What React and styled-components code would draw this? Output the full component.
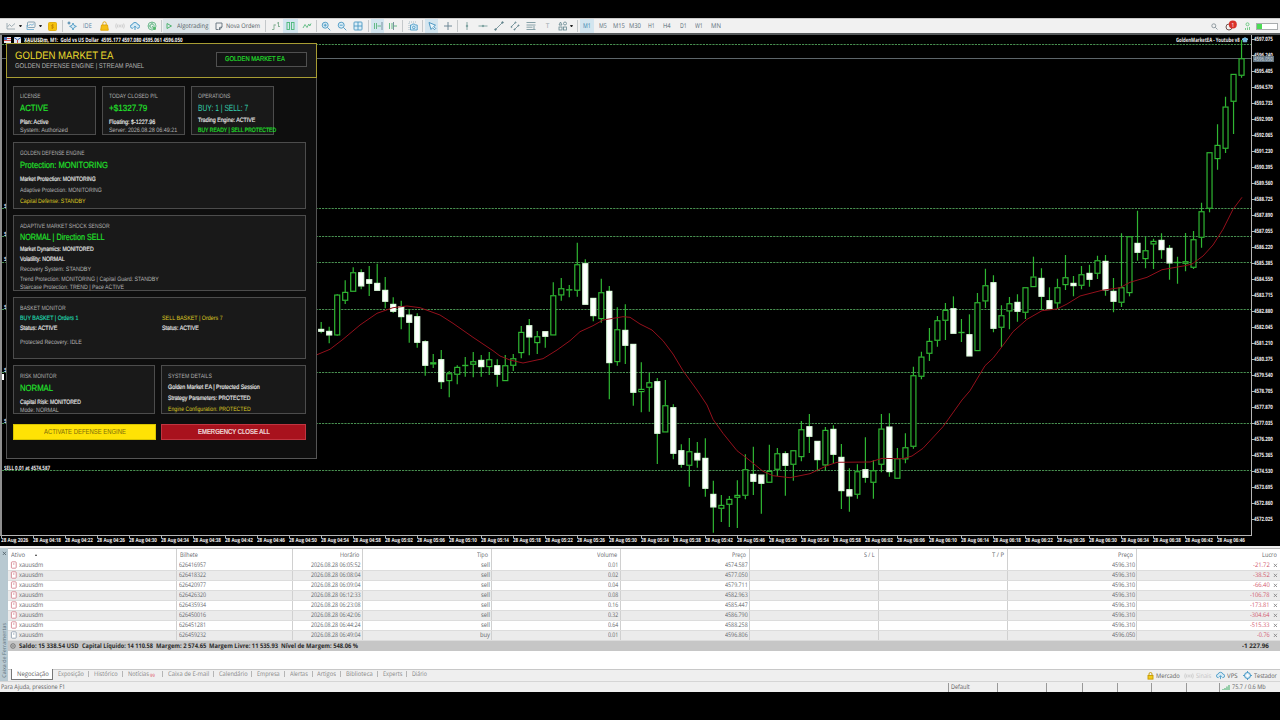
import { useLayoutEffect, useRef, useState } from 'react';
import styled, { createGlobalStyle } from 'styled-components';

const GlobalStyle = createGlobalStyle`
  * { box-sizing: border-box; }
  body {
    margin: 0;
    background: #000;
    overflow: hidden;
    font-family: 'Open Sans', 'Noto Sans', sans-serif;
    text-rendering: geometricPrecision;
  }
`;

/* ---------- text condensed to a given width ---------- */

const FitBox = styled.span`
  display: inline-block;
  flex: none;
  white-space: pre;
`;

const FitText = styled.span`
  display: inline-block;
  transform-origin: 0 50%;
`;

const Fit = ({ w, children }) => {
  const ref = useRef(null);
  const [scale, setScale] = useState(1);

  useLayoutEffect(() => {
    setScale(w / ref.current.offsetWidth);
  }, [w]);

  return (
    <FitBox style={{ width: w }}>
      <FitText ref={ref} style={{ transform: `scaleX(${scale})` }}>{children}</FitText>
    </FitBox>
  );
};

/* ---------- page ---------- */

const Screen = styled.div`
  width: 1280px;
  height: 720px;
  padding-top: 18px;
  background: #000;
  display: flex;
  flex-direction: column;
`;

/* ---------- toolbar ---------- */

const ToolbarBar = styled.header`
  height: 17px;
  flex: none;
  display: flex;
  align-items: center;
  padding-left: 3px;
  background: #f1f1f1;
  border-top: 1px solid #c9c9c9;
  border-bottom: 2px solid #55585a;
`;

const Slot = styled.div`
  width: ${(p) => p.$w}px;
  height: 14px;
  flex: none;
  display: flex;
  align-items: center;
  justify-content: center;
  background: ${(p) => (p.$active ? '#d3e5ef' : 'transparent')};
  color: ${(p) => p.$color || '#566b77'};
  font-size: 6.6px;
  line-height: 14px;
`;

const Divider = styled.i`
  width: 1px;
  height: 12px;
  flex: none;
  background: #c4c8ca;
  margin: 0 ${(p) => p.$r || 0}px 0 ${(p) => p.$l || 0}px;
`;

const Caret = styled.i`
  width: 3px;
  flex: none;
  height: 0;
  border-left: 1.5px solid transparent;
  border-right: 1.5px solid transparent;
  border-top: 2px solid #222;
`;

const ToolButton = styled.div`
  width: ${(p) => p.$w}px;
  height: 14px;
  flex: none;
  display: flex;
  align-items: center;
  gap: ${(p) => p.$gap}px;
  padding-left: ${(p) => p.$pl}px;
  background: ${(p) => (p.$active ? '#dde5e9' : 'transparent')};
  color: #4f5b62;
  font-size: 6.4px;
  line-height: 14px;
`;

const Spacer = styled.div`
  flex: 1;
`;

const Glyph = ({ w = 10, h = 10, color = '#4f9bc4', width = 0.9, children }) => (
  <svg width={w} height={h} viewBox={`0 0 ${w} ${h}`} fill="none" stroke={color} strokeWidth={width}>
    {children}
  </svg>
);

const LineChartIcon = () => (
  <Glyph color="#8b9da6" width={0.8}><path d="M1 2v6h8M1.5 6l2-2.5 2 2 3.5-3" /></Glyph>
);
const TemplateIcon = () => (
  <Glyph color="#6f91a3" width={0.8}><rect x="1.5" y="1" width="7.5" height="5.5" rx="1" /><path d="M2.5 4.5l2-1 1.5.7 2-1.5M1 4v4.5h7" stroke="#5ea6d0" /></Glyph>
);
const DollarIcon = () => (
  <Glyph w={9} h={9} color="#c98d00">
    <rect x="0.5" y="0.5" width="8" height="8" rx="1" fill="#f4c20d" stroke="#e0ab09" />
    <path d="M5.8 3H4a.8.8 0 000 1.5h1A.8.8 0 015 6H3.2M4.5 2v5" />
  </Glyph>
);
const SparkIcon = () => (
  <Glyph>
    <path d="M6 2l1 2.400 2.400 1L7 6.500 6 9 5 6.500 2.600 5.400 5 4.400z" fill="#dcecf5" />
    <path d="M2 .5v3M.5 2h3" stroke="#2e75a2" />
  </Glyph>
);
const BagIcon = () => (
  <Glyph w={9} h={10} color="#e0a300">
    <path d="M2.800 4V2.500a1.700 1.700 0 013.400 0V4" /><path d="M1.500 4h6l.8 5.200H.7z" fill="#f5bf16" />
  </Glyph>
);
const AntennaIcon = () => (
  <Glyph color="#c6c6c6" width={0.8}>
    <circle cx="5" cy="5" r="1" /><path d="M3 3.300a3 3 0 000 3.400M7 3.300a3 3 0 010 3.400M1.400 2.500a5 5 0 000 5M8.600 2.500a5 5 0 010 5" />
  </Glyph>
);
const CloudIcon = ({ size = 10 }) => (
  <svg width={size} height={size} viewBox="0 0 10 10" fill="#d6eaf5" stroke="#3f94c4" strokeWidth="0.9">
    <path d="M3 7.300H2.500a1.900 1.900 0 01-.2-3.800 2.800 2.800 0 015.400 0 1.900 1.900 0 010 3.800H7" />
    <path d="M5 9V5.300M3.700 6.500L5 5.200l1.300 1.300" fill="none" />
  </svg>
);
const GlobeIcon = () => (
  <Glyph color="#6bb58a"><circle cx="5" cy="5" r="4" fill="#e3f3e8" /><circle cx="5" cy="5" r="2.200" /><path d="M5 5l3.500 3.500M1 5h3M5 1v3" /><circle cx="7.500" cy="7.500" r="1.400" fill="#53bb6a" stroke="none" /></Glyph>
);
const PlayIcon = () => (
  <Glyph w={7} h={8} color="#3fae62"><path d="M1 1.500L5.500 4 1 6.500z" /></Glyph>
);
const OrderIcon = () => (
  <Glyph w={8} h={9} color="#63717a"><path d="M7 5V1H1v6.500h2.500M7 5L4.500 8V5.500z" /></Glyph>
);
const BarsIcon = () => (
  <Glyph color="#7fae90"><path d="M3 3.500v5M1 8.500h2M3 4h2M7.500 1v5M6 2h1.500M7.500 5.500H9" /></Glyph>
);
const CandlesIcon = () => (
  <Glyph w={9} color="#48b877"><rect x="1" y="1.500" width="2.500" height="7" /><rect x="5.500" y="1.500" width="2.500" height="7" /></Glyph>
);
const WaveIcon = () => (
  <Glyph color="#5cba80"><path d="M1 7l2-3.500L5 6.500l1.800-3.500 1 2L9 2.500" /></Glyph>
);
const ZoomIcon = ({ plus }) => (
  <Glyph color="#4a97c2" width={0.9}><circle cx="4.200" cy="4.200" r="3" fill="#dceef7" /><path d={`M6.500 6.500L9.300 9.300M2.700 4.200h3${plus ? 'M4.200 2.700v3' : ''}`} /></Glyph>
);
const TilesIcon = () => (
  <Glyph color="#4a97c2" width={0.9}><rect x="1" y="1" width="8" height="8" rx=".8" fill="#dceef7" /><path d="M5 1v8M1 5h8" /></Glyph>
);
const ShiftIcon = ({ muted }) => (
  <Glyph color="#58b57c"><path d={muted ? 'M1.500 2v6M4 2v6M9 5H6' : 'M1.500 2v6M3.500 2v6M4.500 5H8'} /><path d={muted ? 'M5.500 1v8' : 'M9 1v8'} stroke="#6b8896" /></Glyph>
);
const CameraIcon = () => (
  <Glyph color="#4c9bc6">
    <path d="M1 9V1h8" strokeDasharray="1 1" stroke="#9db4bf" /><path d="M2.500 4h1.300l.7-1h2l.7 1h2v5H2.500z" fill="#dceef7" /><circle cx="5.800" cy="6.400" r="1.300" />
  </Glyph>
);
const CursorIcon = () => (
  <Glyph color="#3d8fbd"><path d="M2 1.500l6.500 2.700L6.700 5.500l2 2-1.200 1.200-2-2-1.500 1.800z" fill="#eaf5fa" /></Glyph>
);
const CrossIcon = () => <Glyph color="#63808e"><path d="M5 1v8M1 5h8" /></Glyph>;
const VLineIcon = () => <Glyph color="#7ba09e"><path d="M5 1v8" /><circle cx="5" cy="5" r=".8" fill="#63908e" /></Glyph>;
const HLineIcon = () => <Glyph color="#7ba09e"><path d="M.5 5h9" /><circle cx="5" cy="5" r=".8" fill="#63908e" /></Glyph>;
const TrendIcon = () => (
  <Glyph color="#63858e" width={0.8}><path d="M1.500 8.500l7-7" /><circle cx="1.500" cy="8.500" r=".8" fill="#63858e" /><circle cx="8.500" cy="1.500" r=".8" fill="#63858e" /></Glyph>
);
const ChannelIcon = () => (
  <Glyph color="#63858e" width={0.8}><path d="M1 6l4.500-4.500M4 9l5-5" /><circle cx="1.500" cy="6" r=".6" /><circle cx="5.500" cy="1.500" r=".6" /><circle cx="4.500" cy="8.500" r=".6" /><circle cx="8.500" cy="4.500" r=".6" /></Glyph>
);
const FiboIcon = () => (
  <Glyph color="#7b979f"><path d="M.5 1.500h9M.5 4h9M.5 6.200h6M.5 8.500h9M8 5v3" /></Glyph>
);
const ShapesIcon = () => (
  <Glyph color="#63858e" width={0.8}><path d="M2.500 1L4 4H1z" /><circle cx="7" cy="2.500" r="1.500" /><rect x="1" y="6" width="3" height="3" /><rect x="5.500" y="6" width="3" height="3" /></Glyph>
);
const SearchIcon = () => (
  <Glyph w={7} h={7} color="#87939a"><circle cx="2.800" cy="2.800" r="2" /><path d="M4.300 4.300L6.500 6.500" /></Glyph>
);
const AccountIcon = () => (
  <svg width="12" height="12" viewBox="0 0 12 12">
    <circle cx="4" cy="7" r="3" fill="none" stroke="#6f5550" />
    <circle cx="7.800" cy="4.500" r="4" fill="#d8322b" />
    <text x="7.800" y="6.600" fill="#fff" fontSize="5.500" textAnchor="middle">1</text>
  </svg>
);
const NetIcon = () => (
  <Glyph w={7} h={9} color="#67c77d"><circle cx="3.500" cy="2.300" r="1.500" /><path d="M1.500 8V6M3.500 8V5.500M5.500 8V5" /></Glyph>
);

const Battery = styled.div`
  width: 22px;
  height: 7px;
  margin: 0 2px 0 3px;
  border: 1px solid #a9adaf;
  background: linear-gradient(to right, #4ddb55 5px, #fff 5px);
`;

const PERIODS = [
  ['M1', 14, 8], ['M5', 18, 8], ['M15', 14, 11.5], ['M30', 18, 11.5], ['H1', 14, 7],
  ['H4', 18, 8], ['D1', 14, 7], ['W1', 18, 8], ['MN', 15, 10],
];

const Toolbar = () => (
  <ToolbarBar>
    <Slot $w={16}><LineChartIcon /></Slot><Caret />
    <Slot $w={17}><TemplateIcon /></Slot><Caret />
    <Slot $w={20}><DollarIcon /></Slot>
    <Divider />
    <Slot $w={18}><SparkIcon /></Slot>
    <Slot $w={13} $color="#5c82a0"><Fit w={8.5}>IDE</Fit></Slot>
    <Slot $w={20}><BagIcon /></Slot>
    <Slot $w={11}><AntennaIcon /></Slot>
    <Slot $w={20}><CloudIcon /></Slot>
    <Slot $w={14}><GlobeIcon /></Slot>
    <Divider $l={2} $r={1} />
    <ToolButton $w={47} $pl={3} $gap={4} $active><PlayIcon /><Fit w={31}>Algotrading</Fit></ToolButton>
    <ToolButton $w={55} $pl={5} $gap={3}><OrderIcon /><Fit w={34}>Nova Ordem</Fit></ToolButton>
    <Divider $l={0} $r={2} />
    <Slot $w={15}><BarsIcon /></Slot>
    <Slot $w={15} $active><CandlesIcon /></Slot>
    <Slot $w={17}><WaveIcon /></Slot>
    <Divider $l={1} $r={1} />
    <Slot $w={15}><ZoomIcon plus /></Slot>
    <Slot $w={17}><ZoomIcon /></Slot>
    <Slot $w={16}><TilesIcon /></Slot>
    <Divider $l={2} $r={2} />
    <Slot $w={13} $active><ShiftIcon /></Slot>
    <Slot $w={18}><ShiftIcon muted /></Slot>
    <Divider $r={1} />
    <Slot $w={18}><CameraIcon /></Slot>
    <Divider $r={2} $l={0} />
    <Slot $w={13} $active><CursorIcon /></Slot>
    <Slot $w={19}><CrossIcon /></Slot>
    <Divider />
    <Slot $w={18}><VLineIcon /></Slot>
    <Slot $w={14}><HLineIcon /></Slot>
    <Slot $w={18}><TrendIcon /></Slot>
    <Slot $w={14}><ChannelIcon /></Slot>
    <Slot $w={18}><FiboIcon /></Slot>
    <Slot $w={15} $color="#9aa7ad">T</Slot>
    <Slot $w={15}><ShapesIcon /></Slot>
    <Caret />
    <Divider $l={4} $r={2} />
    {PERIODS.map(([label, w, tw], i) => (
      <Slot key={label} $w={w} $active={i === 0} $color={i === 0 ? '#2f7dab' : undefined}><Fit w={tw}>{label}</Fit></Slot>
    ))}
    <Spacer />
    <Slot $w={14}><SearchIcon /></Slot>
    <Slot $w={20}><AccountIcon /></Slot>
    <Slot $w={12}><NetIcon /></Slot>
    <Battery />
  </ToolbarBar>
);

/* ---------- chart ---------- */

// Bars are [high, body top, body bottom, low, falling] in thirds of a pixel below `base`.
const SESSIONS = [
  {
    base: 220,
    bars: [
      [306, 327, 335, 340, 1], [320, 333, 346, 370, 1], [222, 224, 346, 348, 0], [181, 216, 242, 252, 0],
      [142, 157, 215, 215, 0], [148, 157, 199, 208, 1], [138, 178, 191, 228, 1], [131, 189, 212, 212, 1],
      [171, 210, 245, 265, 1], [232, 252, 275, 279, 1], [242, 259, 291, 328, 1], [268, 284, 308, 368, 1],
      [280, 289, 368, 383, 1], [361, 364, 437, 467, 1], [402, 427, 433, 444, 0], [390, 418, 486, 507, 1],
      [453, 460, 483, 532, 0], [436, 441, 464, 493, 0], [411, 435, 438, 470, 0], [396, 424, 434, 472, 0],
      [405, 420, 441, 470, 1], [396, 418, 441, 465, 0], [418, 436, 464, 500, 1], [405, 436, 483, 483, 0],
      [402, 415, 437, 453, 0], [318, 336, 399, 415, 0], [297, 316, 352, 406, 1], [333, 349, 369, 402, 0],
      [334, 334, 350, 383, 1], [187, 226, 346, 346, 0], [174, 205, 226, 242, 0], [195, 208, 211, 232, 0],
      [68, 133, 212, 230, 0], [118, 130, 254, 254, 1], [234, 234, 288, 304, 1], [176, 217, 297, 308, 0],
      [198, 213, 429, 538, 1], [262, 328, 426, 437, 0], [253, 330, 377, 432, 1], [372, 372, 518, 557, 1],
    ],
  },
  {
    base: 330,
    bars: [
      [97, 177, 186, 247, 0], [129, 157, 173, 245, 0], [144, 154, 311, 402, 1], [150, 226, 307, 307, 0],
      [223, 232, 371, 388, 1], [343, 361, 404, 413, 1], [324, 364, 407, 470, 0], [336, 369, 391, 413, 1],
      [325, 384, 476, 500, 1], [452, 492, 532, 608, 1], [495, 525, 536, 576, 0], [498, 507, 524, 591, 0],
      [451, 495, 503, 594, 0], [373, 418, 497, 508, 0], [350, 432, 455, 495, 1], [434, 434, 461, 551, 1],
      [344, 423, 458, 458, 0], [354, 370, 419, 438, 0], [364, 370, 407, 497, 1], [361, 361, 404, 452, 0],
      [273, 298, 381, 394, 0], [252, 289, 320, 369, 1], [333, 333, 390, 424, 1], [291, 300, 406, 422, 0],
      [286, 297, 374, 400, 1], [342, 381, 483, 537, 1], [415, 478, 499, 545, 1], [403, 424, 494, 506, 0],
      [322, 418, 443, 458, 1], [391, 421, 458, 506, 0], [252, 296, 404, 427, 0], [250, 290, 426, 440, 1],
      [354, 385, 446, 446, 0], [310, 352, 388, 400, 0], [110, 136, 350, 356, 0], [65, 80, 140, 148, 0],
    ],
  },
  {
    base: 200,
    bars: [
      [384, 423, 461, 483, 0], [348, 361, 422, 440, 0], [309, 330, 362, 420, 0], [289, 325, 401, 401, 1],
      [357, 396, 399, 426, 0], [343, 403, 469, 469, 1], [279, 307, 453, 453, 0], [206, 256, 304, 324, 0],
      [226, 247, 386, 397, 1], [316, 346, 383, 441, 0], [291, 310, 334, 388, 0], [283, 306, 335, 365, 1],
      [262, 262, 338, 357, 0], [170, 230, 261, 261, 0], [205, 234, 290, 330, 1], [262, 301, 327, 327, 1],
      [236, 262, 310, 327, 0], [165, 232, 255, 270, 0], [228, 249, 258, 289, 1], [198, 223, 257, 268, 0],
      [194, 219, 239, 260, 1], [167, 181, 221, 237, 0], [165, 183, 271, 287, 1], [234, 273, 305, 337, 1],
      [100, 262, 308, 321, 0], [109, 109, 279, 289, 0], [32, 129, 158, 182, 1], [111, 151, 177, 205, 0],
      [116, 123, 133, 207, 0], [100, 120, 150, 176, 1], [135, 144, 190, 239, 1], [170, 186, 189, 251, 0],
      [99, 184, 191, 214, 0], [93, 118, 203, 207, 0], [8, 34, 113, 143, 0],
    ],
  },
  {
    base: 10,
    bars: [
      [427, 427, 596, 607, 0], [343, 405, 447, 479, 0], [260, 290, 416, 429, 0], [192, 192, 275, 372, 0],
      [90, 145, 197, 203, 0],
    ],
  },
];

const BARS = SESSIONS.flatMap(({ base, bars }) =>
  bars.map(([high, top, bottom, low, falling]) => ({
    high: base + high / 3,
    top: base + top / 3,
    bottom: base + bottom / 3,
    low: base + low / 3,
    falling,
  })),
);

const AVERAGE = [
  [317, 354.7], [330, 349.3], [343, 339.3], [360, 325], [377, 313.3], [393, 307.7], [407, 306], [420, 307.7],
  [440, 315], [453, 323.3], [473, 337.3], [493, 350.7], [500, 356], [510, 360], [523, 363], [543, 358.7],
  [557, 350], [570, 340.7], [580, 331.7], [593, 325.7], [603, 320], [623, 316.7], [630, 317.3], [640, 324],
  [652, 330], [663, 340.7], [673, 354], [683, 370.7], [697, 390], [707, 405], [713, 419.3], [723, 433.3],
  [737, 450.7], [747, 458.3], [763, 471.3], [773, 475.7], [790, 477.7], [810, 473.7], [827, 465.7], [837, 462.3],
  [870, 462], [882, 458.4], [903, 458.7], [912, 456], [923, 448.3], [943, 426.7], [962, 400], [970, 390.7],
  [985, 365.7], [993, 358.3], [1002, 346.7], [1013, 331.7], [1027, 319.3], [1042, 310.7], [1057, 309],
  [1067, 304], [1080, 296], [1102, 290.3], [1120, 287.7], [1130, 282.3], [1147, 277.3], [1162, 269.7],
  [1185, 265.7], [1192, 264], [1203, 256], [1213, 245], [1223, 229.3], [1233, 209.3], [1242, 197.3],
];

const LEVELS = [44.5, 208.5, 236.5, 262.5, 309.5, 372.5, 423.5, 470.5];

const ChartArea = styled.section`
  position: relative;
  height: 511px;
  flex: none;
  display: grid;
  grid-template-columns: 1252px 28px;
  grid-template-rows: 501px 10px;
  background: #000;
`;

const Plot = styled.svg`
  display: block;
  border-left: 2px solid #8f8f8f;
  border-right: 1px solid #b5b5b5;
  border-bottom: 1px solid #b5b5b5;
`;

const Chart = () => (
  <Plot width="1252" height="501" viewBox="2 35 1249 500">
    {LEVELS.map((y) => (
      <line key={y} x1="2" x2="1251" y1={y} y2={y} stroke="#489050" strokeWidth="1" strokeDasharray="2.200 1" />
    ))}
    <line x1="2" x2="1251" y1="58.500" y2="58.500" stroke="#5d656a" strokeWidth="1" />
    <rect x="2" y="374" width="2" height="6" fill="#fff" />
    {BARS.map((b, i) => {
      const x = 321.2 + i * 8.003;
      return (
        <g key={i} stroke="#2fb632" strokeWidth="1.200">
          <path d={`M${x} ${b.high}V${b.top}M${x} ${b.bottom}V${b.low}`} />
          <rect
            x={x - 2.5}
            y={b.top + 0.4}
            width="5"
            height={Math.max(b.bottom - b.top - 0.8, 0.2)}
            fill={b.falling ? '#fff' : '#000'}
            stroke={b.falling ? '#e0ffe0' : '#2fb632'}
          />
        </g>
      );
    })}
    <polyline
      points={AVERAGE.map((p) => p.join()).join(' ')}
      fill="none"
      stroke="#94101c"
      strokeWidth="1"
      strokeLinejoin="round"
    />
  </Plot>
);

const PriceAxis = styled.div`
  display: flex;
  flex-direction: column;
  color: #efefef;
  font: bold 5.8px 'Open Sans', sans-serif;
  padding-top: 1px;
`;

const PriceTick = styled.div`
  height: 6px;
  margin-bottom: 10.03px;
  display: flex;
  align-items: center;
  line-height: 6px;

  &::before {
    content: '';
    width: 2px;
    height: 1px;
    background: #b5b5b5;
  }
`;

const PriceTag = styled.div`
  position: absolute;
  left: 1253px;
  top: 21px;
  width: 21px;
  height: 6px;
  padding-left: 1px;
  background: #60717e;
  color: #b9c6ce;
  font: 600 5.800px/6px 'Open Sans', sans-serif;
`;

const TimeAxis = styled.div`
  display: flex;
  color: #ebebeb;
  font: bold 5.700px/8px 'Open Sans', sans-serif;
  padding-left: 1px;
`;

const TimeTick = styled.div`
  width: 32px;
  flex: none;
  height: 9px;
  background: linear-gradient(#b5b5b5, #b5b5b5) 0 0 / 1px 2px no-repeat;
`;

const ChartTitle = styled.div`
  position: absolute;
  left: 4px;
  top: 1px;
  display: flex;
  align-items: center;
  color: #f2f2f2;
  font: bold 5.900px/8px 'Open Sans', sans-serif;
`;

const SymbolName = styled.span`
  width: 26px;
  margin: 0 0 0 3px;
  text-shadow: 0 2px 0 #7e7a25;
`;

const ExpertName = styled.div`
  position: absolute;
  left: 1176px;
  top: 1px;
  display: flex;
  align-items: center;
  gap: 1px;
  color: #e8e8e8;
  font: bold 5.900px/8px 'Open Sans', sans-serif;
`;

const OrderLabel = styled.div`
  position: absolute;
  left: 4px;
  top: ${(p) => p.$y - 39}px;
  color: #e8e8e8;
  font: bold 5.800px/8px 'Open Sans', sans-serif;
`;

const prices = Array.from({ length: 31 }, (_, i) => (4597.075 - i * 0.835).toFixed(3));
const times = Array.from({ length: 38 }, (_, i) => {
  const m = 4 * 60 + 18 + i * 4;
  return `28 Aug 0${Math.floor(m / 60)}:${String(m % 60).padStart(2, '0')}`;
});

/* ---------- stream panel ---------- */

const Panel = styled.aside`
  position: absolute;
  left: 6px;
  top: 8px;
  width: 311px;
  height: 416px;
  background: #0e0e0e;
  border: 1px solid #555;
  font-family: 'Liberation Sans', Arial, sans-serif;
`;

const PanelHeader = styled.div`
  height: 35px;
  margin: -1px -1px 0;
  padding: 7px 9px 0 7.500px;
  display: flex;
  justify-content: space-between;
  background: #181818;
  border: 1px solid #a89d33;
`;

const PanelTitle = styled.h1`
  margin: 0;
  color: #ecdc2e;
  font-size: 10.800px;
  font-weight: 400;
  line-height: 10px;
`;

const PanelSubtitle = styled.p`
  margin: 1.500px 0 0;
  color: #b2b2b2;
  font-size: 7px;
  line-height: 8px;
`;

const Badge = styled.div`
  width: 91px;
  height: 15px;
  margin-top: 1px;
  padding-left: 8px;
  border: 1px solid #505050;
  background: #141414;
  color: #22dd2c;
  font-size: 7px;
  line-height: 14px;
  -webkit-text-stroke: 0.2px;
`;

const PanelBody = styled.div`
  padding: 8px 10px 0 6px;
  display: flex;
  flex-direction: column;
`;

const CardRow = styled.div`
  display: flex;
  gap: 6px;
  margin-top: ${(p) => p.$mt || 0}px;
`;

const CardBox = styled.div`
  width: ${(p) => p.$w}px;
  height: ${(p) => p.$h}px;
  flex: none;
  margin-top: ${(p) => p.$mt || 0}px;
  padding: 1px 0 0 6.300px;
  background: #191919;
  border: 1px solid #4c4c4c;
`;

const TONES = {
  title: '#b0b0b0', muted: '#b4b4b4', white: '#ececec', green: '#22e62c', teal: '#35cfb0', aqua: '#20d9b0', gold: '#dcc822',
};

const Line = styled.div`
  height: ${(p) => p.$step}px;
  display: flex;
  align-items: flex-end;
  padding-bottom: ${(p) => (p.$big ? 1.500 : 0)}px;
  color: ${(p) => TONES[p.$tone]};
  font-size: ${(p) => (p.$big ? 9 : 6.300)}px;
  line-height: 8px;
  -webkit-text-stroke: ${(p) => (['white', 'green', 'aqua'].includes(p.$tone) ? 0.15 : 0)}px;
`;

const Split = styled.div`
  display: grid;
  grid-template-columns: 141.300px 1fr;
`;

// Lines are [text, tone, distance from the line above, text width, big].
const Lines = ({ rows }) =>
  rows.map(([text, tone, step, w, big]) => (
    <Line key={text} $tone={tone} $step={step} $big={big}><Fit w={w}>{text}</Fit></Line>
  ));

const Card = ({ w = 293, h, mt, rows, children }) => (
  <CardBox $w={w} $h={h} $mt={mt}>
    <Lines rows={rows} />
    {children}
  </CardBox>
);

const ActionButton = styled.button`
  width: ${(p) => p.$w}px;
  height: 16px;
  margin-right: ${(p) => p.$mr || 0}px;
  padding: 0;
  display: flex;
  align-items: center;
  justify-content: center;
  border: 1px solid ${(p) => (p.$danger ? '#c03540' : '#d8c400')};
  background: ${(p) => (p.$danger ? '#a8121d' : '#ffe205')};
  color: ${(p) => (p.$danger ? '#f6e8e8' : '#7d6d0c')};
  font: 7px/14px 'Liberation Sans', Arial, sans-serif;
  -webkit-text-stroke: ${(p) => (p.$danger ? 0.2 : 0)}px;
`;

const StreamPanel = () => (
  <Panel>
    <PanelHeader>
      <div>
        <PanelTitle><Fit w={98.5}>GOLDEN MARKET EA</Fit></PanelTitle>
        <PanelSubtitle><Fit w={129.5}>GOLDEN DEFENSE ENGINE | STREAM PANEL</Fit></PanelSubtitle>
      </div>
      <Badge><Fit w={60}>GOLDEN MARKET EA</Fit></Badge>
    </PanelHeader>
    <PanelBody>
      <CardRow>
        <Card w={83} h={49} rows={[
          ['LICENSE', 'title', 13, 20.5],
          ['ACTIVE', 'green', 12.5, 28.5, true],
          ['Plan: Active', 'white', 13.5, 28.5],
          ['System: Authorized', 'muted', 8, 47.5],
        ]} />
        <Card w={83} h={49} rows={[
          ['TODAY CLOSED P/L', 'title', 13, 49],
          ['+$1327.79', 'green', 12.5, 38.5, true],
          ['Floating: $-1227.96', 'white', 13.5, 46],
          ['Server: 2026.08.28 06:49:21', 'muted', 8, 68.5],
        ]} />
        <Card w={83} h={49} rows={[
          ['OPERATIONS', 'title', 13, 32.5],
          ['BUY: 1 | SELL: 7', 'teal', 12, 50, true],
          ['Trading Engine: ACTIVE', 'white', 11.5, 57],
          ['BUY READY | SELL PROTECTED', 'green', 10.5, 78],
        ]} />
      </CardRow>
      <Card h={67} mt={7} rows={[
        ['GOLDEN DEFENSE ENGINE', 'title', 14, 64.5],
        ['Protection: MONITORING', 'green', 12.5, 88, true],
        ['Market Protection: MONITORING', 'white', 13.5, 76],
        ['Adaptive Protection: MONITORING', 'muted', 11, 82],
        ['Capital Defense: STANDBY', 'gold', 11, 66],
      ]} />
      <Card h={76} mt={6} rows={[
        ['ADAPTIVE MARKET SHOCK SENSOR', 'title', 14, 90],
        ['NORMAL | Direction SELL', 'green', 11.5, 85, true],
        ['Market Dynamics: MONITORED', 'white', 11, 74],
        ['Volatility: NORMAL', 'white', 10, 45],
        ['Recovery System: STANDBY', 'muted', 10, 71],
        ['Trend Protection: MONITORING | Capital Guard: STANDBY', 'muted', 10, 138.5],
        ['Staircase Protection: TREND | Pace ACTIVE', 'muted', 8, 104],
      ]} />
      <Card h={62} mt={6} rows={[['BASKET MONITOR', 'title', 14, 45.5]]}>
        <Split>
          <div>
            <Lines rows={[
              ['BUY BASKET | Orders 1', 'aqua', 10, 58.5],
              ['Status: ACTIVE', 'white', 10, 37.5],
              ['Protected Recovery: IDLE', 'muted', 14, 62],
            ]} />
          </div>
          <div>
            <Lines rows={[
              ['SELL BASKET | Orders 7', 'gold', 10, 60.5],
              ['Status: ACTIVE', 'white', 10, 37],
            ]} />
          </div>
        </Split>
      </Card>
      <CardRow $mt={6}>
        <Card w={142} h={49} rows={[
          ['RISK MONITOR', 'title', 14, 36.5],
          ['NORMAL', 'green', 12.5, 33.5, true],
          ['Capital Risk: MONITORED', 'white', 13.5, 60.5],
          ['Mode: NORMAL', 'muted', 8, 38.5],
        ]} />
        <Card w={145} h={49} rows={[
          ['SYSTEM DETAILS', 'title', 14, 43.5],
          ['Golden Market EA | Protected Session', 'white', 11, 91.5],
          ['Strategy Parameters: PROTECTED', 'white', 11, 82.5],
          ['Engine Configuration: PROTECTED', 'gold', 11, 82.5],
        ]} />
      </CardRow>
      <CardRow $mt={10}>
        <ActionButton $w={143} $mr={-1}><Fit w={82}>ACTIVATE DEFENSE ENGINE</Fit></ActionButton>
        <ActionButton $w={145} $danger><Fit w={72}>EMERGENCY CLOSE ALL</Fit></ActionButton>
      </CardRow>
    </PanelBody>
  </Panel>
);

/* ---------- toolbox ---------- */

const Toolbox = styled.section`
  height: 135px;
  flex: none;
  display: flex;
  background: #fff;
  border-top: 2px solid #efefef;
`;

const SideStrip = styled.div`
  width: 8px;
  flex: none;
  display: flex;
  flex-direction: column;
  align-items: center;
  justify-content: space-between;
  background: #b8c9d1;
  color: #5f7480;
  padding: 3px 0;

  span {
    writing-mode: vertical-rl;
    transform: rotate(180deg);
    font-size: 5.400px;
    line-height: 8px;
  }
`;

const ToolboxMain = styled.div`
  flex: 1;
  display: flex;
  flex-direction: column;
  border-top: 1px solid #b8b8b8;
`;

const Row = styled.div`
  height: ${(p) => (p.$head ? 12 : 10)}px;
  flex: none;
  display: grid;
  grid-template-columns: 169px 116px 70px 129px 129px 129px 129px 129px 129px 1fr;
  background: ${(p) => (p.$odd ? '#ebebeb' : '#fff')};
  border-bottom: ${(p) => (p.$head ? 0 : 1)}px solid #dcdcdc;
  color: #5e6367;
  font-size: 6.400px;
  line-height: 8px;
`;

const Cell = styled.div`
  display: flex;
  align-items: center;
  justify-content: ${(p) => (p.$left ? 'flex-start' : 'flex-end')};
  gap: 2px;
  padding: ${(p) => (p.$head ? '0 3px 1px 3px' : '0 1.500px 0.500px 2px')};
  border-right: 1px solid #d0d0d0;
  color: ${(p) => (p.$loss ? '#d2586c' : 'inherit')};

  &:last-child {
    gap: 3px;
    border-right: 0;
    padding-right: ${(p) => (p.$head ? 3 : 2.500)}px;
  }
`;

const SortArrow = styled.i`
  margin-left: 8px;
  border-left: 1.500px solid transparent;
  border-right: 1.500px solid transparent;
  border-bottom: 2px solid #333;
`;

const DocIcon = ({ buy }) => (
  <Glyph w={7} h={8} color={buy ? '#8595a8' : '#d17684'} width={0.8}>
    <rect x="1.400" y="0.800" width="4.800" height="6.400" rx="0.800" fill="#fff" /><path d="M3.800 2.200v1.600" />
  </Glyph>
);

const CloseIcon = ({ color = '#7d7d7d' }) => (
  <Glyph w={5} h={5} color={color} width={0.8}><path d="M.8.8l3.200 3.200M4 .8L.8 4" /></Glyph>
);

const Summary = styled.div`
  height: 10px;
  flex: none;
  display: flex;
  align-items: center;
  gap: 3px;
  padding: 0 11.500px 1px 2px;
  background: #c6c6c6;
  color: #2a2a2a;
  font-size: 6.400px;
  font-weight: 700;
  line-height: 8px;
`;

const Empty = styled.div`
  height: 18px;
  flex: none;
`;

const TabBar = styled.div`
  flex: 1;
  display: flex;
  align-items: flex-start;
  background: #efefef;
  border-top: 1px solid #c8c8c8;
  padding-left: 3px;
  color: #858585;
  font-size: 6.400px;
  line-height: 8px;
`;

const ActiveTab = styled.div`
  width: 42px;
  height: 11px;
  margin: -1px 5px 0 0;
  padding-left: 4.500px;
  background: #fff;
  color: #606060;
  border: 1px solid #777;
  border-top: 0;
  line-height: 10px;
`;

const Tab = styled.div`
  display: flex;
  align-items: center;
  padding-right: 5px;
  margin-right: 4.900px;
  background: linear-gradient(#b5b5b5, #b5b5b5) right 1px / 1px 6px no-repeat;

  &:nth-child(12) {
    background: none;
  }

  sub {
    color: #dd4a58;
    font-size: 4.500px;
    line-height: 4px;
    vertical-align: baseline;
    align-self: flex-end;
    margin: 0 3px 0 1px;
  }
`;

const Services = styled.div`
  margin-left: auto;
  display: flex;
  align-items: center;
  height: 11px;
  color: #606060;
  padding-right: 4px;
`;

const Service = styled.div`
  display: flex;
  align-items: center;
  gap: 2px;
  margin-left: 5px;
  color: ${(p) => (p.$off ? '#c4c4c4' : 'inherit')};
`;

const GearIcon = () => (
  <Glyph w={9} h={9} color="#3f94c4"><circle cx="4.500" cy="4.500" r="3" fill="#d6eaf5" strokeWidth="1" /><circle cx="4.500" cy="4.500" r="1.200" fill="#fff" stroke="none" /><path d="M4.500 0v1.500M4.500 7.500V9M0 4.500h1.500M7.500 4.500H9" /></Glyph>
);

const StatusBar = styled.footer`
  height: 11px;
  flex: none;
  display: flex;
  align-items: center;
  background: #efefef;
  border-top: 1px solid #d5d5d5;
  color: #5c5c5c;
  font-size: 6.400px;
  line-height: 8px;
`;

const StatusCell = styled.div`
  width: ${(p) => p.$w}px;
  height: 9px;
  flex: none;
  display: flex;
  align-items: center;
  gap: 2px;
  padding: 0 0 1px ${(p) => (p.$first ? 1 : 2)}px;
  border-left: ${(p) => (p.$first ? 0 : 1)}px solid #989898;
`;

const HEADERS = [
  ['Ativo', 14], ['Bilhete', 18], ['Horário', 19.5], ['Tipo', 11], ['Volume', 20.5],
  ['Preço', 14], ['S / L', 11], ['T / P', 12], ['Preço', 15], ['Lucro', 15],
];

const ORDERS = [
  ['626416957', '06:05:52', 'sell', '0.01', '4574.587', '4596.310', '-21.72', 16.5],
  ['626418322', '06:08:04', 'sell', '0.02', '4577.050', '4596.310', '-38.52', 16.5],
  ['626420977', '06:09:04', 'sell', '0.04', '4579.711', '4596.310', '-66.40', 16.5],
  ['626426320', '06:12:33', 'sell', '0.08', '4582.963', '4596.310', '-106.78', 19.5],
  ['626435934', '06:23:08', 'sell', '0.16', '4585.447', '4596.310', '-173.81', 19.5],
  ['626450016', '06:42:06', 'sell', '0.32', '4586.790', '4596.310', '-304.64', 19.5],
  ['626451281', '06:44:24', 'sell', '0.64', '4588.258', '4596.310', '-515.33', 19.5],
  ['626459232', '06:49:04', 'buy', '0.01', '4596.806', '4596.050', '-0.76', 13],
];

const TABS = [
  ['Exposição', 26], ['Histórico', 24], ['Notícias', 21], ['Caixa de E-mail', 41], ['Calendário', 28.5],
  ['Empresa', 22.5], ['Alertas', 18], ['Artigos', 19], ['Biblioteca', 26.5], ['Experts', 19], ['Diário', 15],
];

const OrderTable = () => (
  <>
    <Row $head>
      {HEADERS.map(([label, w], i) => (
        <Cell key={i} $head $left={i < 2}><Fit w={w}>{label}</Fit>{i === 0 && <SortArrow />}</Cell>
      ))}
    </Row>
    {ORDERS.map(([ticket, time, type, volume, open, price, profit, pw], i) => (
      <Row key={ticket} $odd={i % 2 === 1}>
        <Cell $left><DocIcon buy={type === 'buy'} /><Fit w={24.5}>xauusdm</Fit></Cell>
        <Cell $left><Fit w={27}>{ticket}</Fit></Cell>
        <Cell><Fit w={50}>{`2026.08.28 ${time}`}</Fit></Cell>
        <Cell><Fit w={type === 'buy' ? 10 : 9}>{type}</Fit></Cell>
        <Cell><Fit w={10.5}>{volume}</Fit></Cell>
        <Cell><Fit w={22.5}>{open}</Fit></Cell>
        <Cell />
        <Cell />
        <Cell><Fit w={23}>{price}</Fit></Cell>
        <Cell $loss><Fit w={pw}>{profit}</Fit><CloseIcon /></Cell>
      </Row>
    ))}
    <Summary>
      <Glyph w={6} h={6} color="#555" width={0.7}><circle cx="3" cy="3" r="2.300" /><path d="M1.800 3h2.400" /></Glyph>
      <Fit w={60}>Saldo: 15 338.54 USD</Fit>
      <Fit w={70.5}>Capital Líquido: 14 110.58</Fit>
      <Fit w={50}>Margem: 2 574.65</Fit>
      <Fit w={69.5}>Margem Livre: 11 535.93</Fit>
      <Fit w={77}>Nível de Margem: 548.06 %</Fit>
      <Spacer />
      <Fit w={26.5}>-1 227.96</Fit>
    </Summary>
  </>
);

const App = () => (
  <Screen>
    <GlobalStyle />
    <Toolbar />
    <ChartArea>
      <Chart />
      <PriceAxis>
        {prices.map((p) => <PriceTick key={p}><Fit w={19}>{p}</Fit></PriceTick>)}
      </PriceAxis>
      <TimeAxis>
        <TimeTick><Fit w={27}>28 Aug 2026</Fit></TimeTick>
        {times.map((t) => <TimeTick key={t}><Fit w={28}>{t}</Fit></TimeTick>)}
      </TimeAxis>
      <PriceTag><Fit w={19}>4596.050</Fit></PriceTag>
      <ChartTitle>
        <svg width="17" height="7" viewBox="0 0 17 7">
          <rect width="7" height="6" fill="#e9edf3" /><path d="M0 1.500h7M0 3.500h7" stroke="#d25555" /><rect width="3" height="3" fill="#4b6db5" />
          <rect x="10" width="7" height="6" fill="#dfe7f0" /><path d="M10 .5l3.500 2.500L17 .5" stroke="#3c67b3" fill="none" /><path d="M13.500 3v3" stroke="#c94848" />
        </svg>
        <SymbolName><Fit w={25}>XAUUSDm,</Fit></SymbolName>
        <Fit w={132.5}>M1:  Gold vs US Dollar  4595.177 4597.080 4595.061 4596.050</Fit>
      </ChartTitle>
      <ExpertName>
        <Fit w={64}>GoldenMarketEA - Youtube v8</Fit>
        <Glyph w={8} h={6} color="#8ecdf0"><path d="M1 2.200L4 .7l3 1.500-3 1.500zM2.200 3v1.800h3.600V3" fill="#5cb0e0" /></Glyph>
      </ExpertName>
      {[205.5, 233.5, 259, 307, 369.5, 420.5].map((y) => <OrderLabel key={y} $y={y}>S</OrderLabel>)}
      <OrderLabel $y={467.5}><Fit w={46}>SELL 0.01 at 4574.587</Fit></OrderLabel>
      <StreamPanel />
    </ChartArea>
    <Toolbox>
      <SideStrip>
        <CloseIcon color="#4d5d66" />
        <span>Caixa de Ferramentas</span>
      </SideStrip>
      <ToolboxMain>
        <OrderTable />
        <Empty />
        <TabBar>
          <ActiveTab><Fit w={31.5}>Negociação</Fit></ActiveTab>
          {TABS.map(([label, w]) => (
            <Tab key={label}><Fit w={w}>{label}</Fit>{label === 'Notícias' && <sub>99</sub>}</Tab>
          ))}
          <Services>
            <Service><Glyph w={7} h={8} color="#c79a00"><path d="M2 3.500V2a1.500 1.500 0 013 0v1.500" /><rect x="1" y="3.500" width="5" height="3.600" fill="#f3cd1c" /></Glyph><Fit w={23.5}>Mercado</Fit></Service>
            <Service $off><AntennaIcon /><Fit w={15}>Sinais</Fit></Service>
            <Service><CloudIcon size={9} /><Fit w={10.5}>VPS</Fit></Service>
            <Service><GearIcon /><Fit w={22.5}>Testador</Fit></Service>
          </Services>
        </TabBar>
      </ToolboxMain>
    </Toolbox>
    <StatusBar>
      <StatusCell $first $w={948}><Fit w={64}>Para Ajuda, pressione F1</Fit></StatusCell>
      <StatusCell $w={49}><Fit w={19}>Default</Fit></StatusCell>
      <StatusCell $w={49} />
      <StatusCell $w={36} />
      <StatusCell $w={35} />
      <StatusCell $w={34} />
      <StatusCell $w={35} />
      <StatusCell $w={33} />
      <StatusCell $w={61}>
        <Glyph w={8} h={6} color="#58b77a" width={1.200}><path d="M1 6V5M3 6V4M5 6V2.500M7 6V1" /></Glyph>
        <Fit w={34}>75.7 / 0.6 Mb</Fit>
      </StatusCell>
    </StatusBar>
  </Screen>
);

export default App;
